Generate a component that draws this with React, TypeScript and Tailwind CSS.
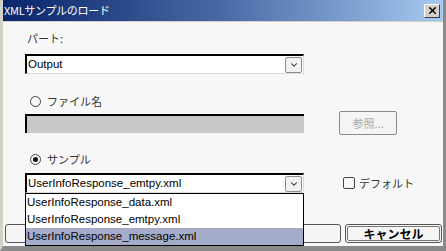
import { X, ChevronDown } from 'lucide-react'

const jp = { fontFamily: '"Noto Sans CJK JP", sans-serif' }

function Radio({ checked, label }: { checked?: boolean; label: string }) {
  return (
    <div className="flex h-[14px] items-center gap-[6px] pl-[5px] text-[11px] leading-none text-[#333]">
      <span className="flex h-[11px] w-[11px] items-center justify-center rounded-full border border-[#444] bg-[#f7f7f7]">
        {checked && <span className="h-[5px] w-[5px] rounded-full bg-[#111]" />}
      </span>
      <span className="font-['Noto_Sans_CJK_JP',sans-serif]">{label}</span>
    </div>
  )
}

function Combo({ value }: { value: string }) {
  return (
    <div className="flex h-[20px] w-[279px] items-center justify-between border-t-2 border-l-2 border-t-black border-l-black border-b border-r border-b-[#dcdcdc] border-r-[#dcdcdc] bg-white pr-[1px]">
      <span className="pl-[1px] font-['Liberation_Sans',sans-serif] text-[11.5px] leading-none text-black">
        {value}
      </span>
      <span className="flex h-[16px] w-[17px] items-center justify-center rounded-[2px] border border-[#8c8c8c] bg-[#f2f2f2]">
        <ChevronDown size={10} strokeWidth={2.5} className="text-[#222]" />
      </span>
    </div>
  )
}

export default function App() {
  return (
    <div className="relative h-[251px] w-[446px] overflow-hidden border-r-[3px] border-b-[5px] border-l-[3px] border-r-[#8a8a8a] border-b-[#8a8a8a] border-l-[#d4d0c8] bg-[#f7f7f7]">
      {/* title bar */}
      <div className="flex h-[22px] items-center justify-between border-b border-[#d4d0c8] bg-gradient-to-r from-[#0a246a] via-[#4a6aa6] to-[#a6caf0] pr-[3px] pl-[1px]">
        <span style={jp} className="text-[11px] leading-none tracking-[-0.3px] text-white">
          XMLサンプルのロード
        </span>
        <span className="flex h-[14px] w-[16px] items-center justify-center border-t border-l border-r border-b border-t-white border-l-white border-r-[#404040] border-b-[#404040] bg-[#d4d0c8]">
          <X size={11} strokeWidth={3} className="text-black" />
        </span>
      </div>

      <div className="flex flex-col pl-[22px]">
        <div style={jp} className="mt-[11px] h-[14px] pl-[2px] text-[11px] leading-none text-[#333]">
          パート:
        </div>
        <div className="mt-[7px]">
          <Combo value="Output" />
        </div>

        <div className="mt-[20px]">
          <Radio label="ファイル名" />
        </div>
        <div className="mt-[3px] flex h-[24px] items-center">
          <div className="h-[19px] w-[279px] border-t-2 border-l-2 border-t-black border-l-black bg-[#c8c8c8]" />
          <div
            style={jp}
            className="ml-[35px] flex h-[24px] w-[58px] items-center justify-center rounded-[2px] border border-[#8a8a8a] bg-[#f5f5f5] text-[11px] text-[#a8a8a8]"
          >
            参照...
          </div>
        </div>

        <div className="mt-[17px]">
          <Radio checked label="サンプル" />
        </div>
        <div className="mt-[7px] flex items-center">
          <Combo value="UserInfoResponse_emtpy.xml" />
          <div className="ml-[39px] flex items-center gap-[4px]">
            <span className="h-[12px] w-[12px] rounded-[2px] border border-[#444]" />
            <span style={jp} className="text-[11px] leading-none text-[#333]">
              デフォルト
            </span>
          </div>
        </div>
      </div>

      {/* buttons */}
      <div className="mt-[31px] flex gap-[4px] pl-[2px]">
        <div className="h-[19px] w-[336px] rounded-[3px] border border-[#555] bg-[#f5f5f5]" />
        <div className="flex h-[19px] w-[97px] items-center justify-center rounded-[3px] border border-[#555] bg-[#f5f5f5] p-[1px]">
          <div
            style={jp}
            className="flex h-full w-full items-center justify-center rounded-[2px] border border-[#777] text-[12px] font-bold leading-none text-black"
          >
            キャンセル
          </div>
        </div>
      </div>

      {/* open dropdown list */}
      <div className="absolute top-[193px] left-[22px] w-[279px] border border-black bg-white font-['Liberation_Sans',sans-serif] text-[11.5px] text-black">
        <div className="flex h-[17px] items-center pl-[1px]">UserInfoResponse_data.xml</div>
        <div className="flex h-[17px] items-center pl-[1px]">UserInfoResponse_emtpy.xml</div>
        <div className="flex h-[17px] items-center bg-[#a5acc9] pl-[1px]">UserInfoResponse_message.xml</div>
      </div>
    </div>
  )
}
